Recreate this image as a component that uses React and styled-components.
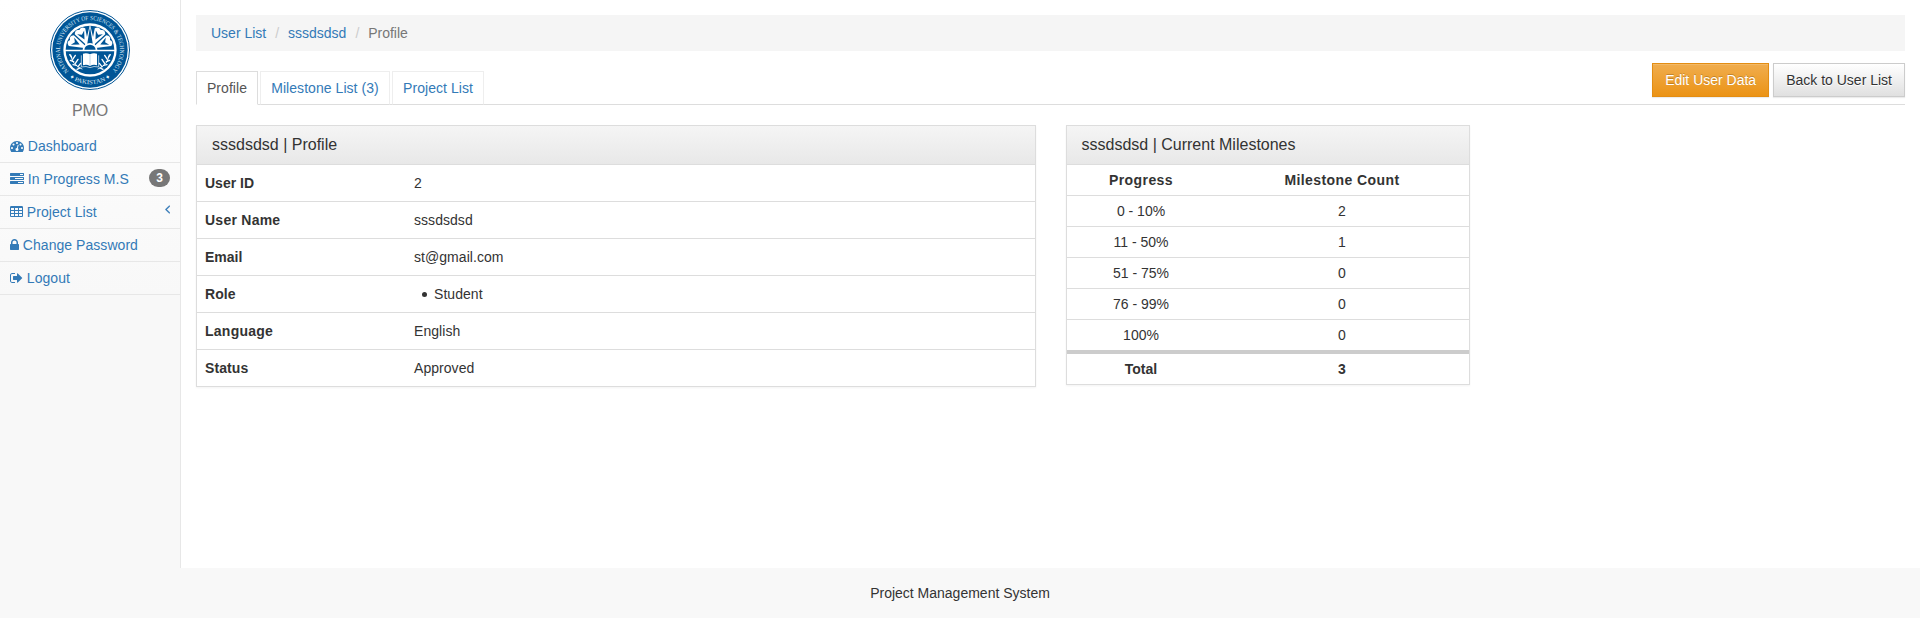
import React from "react";
import styled, { createGlobalStyle, css } from "styled-components";

const GlobalStyle = createGlobalStyle`
  *, *::before, *::after { box-sizing: border-box; }
  body {
    margin: 0;
    background: #f8f8f8;
    color: #333;
    font: 14px/20px "Liberation Sans", Arial, sans-serif;
  }
`;

const Page = styled.div`
  display: flex;
  flex-direction: column;
  height: 618px;
`;

const Body = styled.div`
  display: flex;
  flex: 1;
`;

const Footer = styled.footer`
  height: 50px;
  padding: 15px;
  text-align: center;
`;

/* Sidebar */

const Sidebar = styled.aside`
  width: 181px;
  border-right: 1px solid #e7e7e7;
  background: #f8f8f8 linear-gradient(#fff, #f8f8f8) no-repeat 0 0 / 100% 295px;
`;

const Brand = styled.div`
  display: flex;
  flex-direction: column;
  align-items: center;
  height: 130px;
  padding-top: 10px;
  color: #777;
  font-size: 16px;
  letter-spacing: -0.2px;
`;

const BrandName = styled.span`
  margin-top: 11px;
`;

const Menu = styled.nav`
  display: flex;
  flex-direction: column;
`;

const MenuLink = styled.a`
  display: flex;
  align-items: flex-start;
  height: 33px;
  padding: 6px 10px;
  border-bottom: 1px solid #e7e7e7;
  color: #337ab7;
  letter-spacing: 0.05px;
  white-space: pre;
`;

const Glyph = styled.svg`
  flex: none;
  width: ${(p) => p.$w}px;
  height: 14px;
  margin: 3px 3.8px 0 0;
  fill: currentColor;
`;

const Arrow = styled(Glyph)`
  margin: 0 0 0 auto;
  stroke: currentColor;
  stroke-width: 50;
`;

const Badge = styled.span`
  margin: 0 0 0 auto;
  min-width: 10px;
  padding: 3px 7px;
  border-radius: 10px;
  background: #777;
  color: #fff;
  font-size: 12px;
  font-weight: 700;
  line-height: 12px;
`;

/* Content */

const Content = styled.main`
  flex: 1;
  padding: 15px 15px 0;
  background: #fff;
`;

const Crumb = styled.li`
  white-space: pre;
  color: ${(p) => (p.$active ? "#777" : "#337ab7")};
`;

const Breadcrumb = styled.ol`
  display: flex;
  gap: 4px;
  margin: 0;
  padding: 8px 15px;
  list-style: none;
  background: #f5f5f5;

  li + li::before {
    content: "/\u00a0";
    padding: 0 5px;
    color: #ccc;
  }
`;

const Toolbar = styled.div`
  display: flex;
  justify-content: space-between;
  height: 42px;
  margin-top: 12px;
  border-bottom: 1px solid #ddd;
`;

const Tabs = styled.div`
  display: flex;
  gap: 2px;
  margin: 8px 0 -1px;
`;

const Tab = styled.a`
  width: ${(p) => p.$w}px;
  height: 34px;
  padding: 6px 0;
  border: 1px solid #eee;
  border-bottom-color: #ddd;
  color: #337ab7;
  letter-spacing: 0.05px;
  text-align: center;
  ${(p) =>
    p.$active &&
    css`
      border-color: #ddd;
      border-bottom-color: #fff;
      background: #fff;
      color: #555;
    `}
`;

const Actions = styled.div`
  display: flex;
  gap: 4px;
`;

const Button = styled.button`
  height: 34px;
  padding: 6px 12px;
  border: 1px solid #ccc;
  background: linear-gradient(#fff, #e0e0e0);
  color: #333;
  font: inherit;
  text-shadow: 0 1px 0 #fff;
  box-shadow: inset 0 1px 0 rgba(255, 255, 255, 0.15), 0 1px 1px rgba(0, 0, 0, 0.075);
  ${(p) =>
    p.$warning &&
    css`
      border-color: #e38d13;
      background: linear-gradient(#f0ad4e, #eb9316);
      color: #fff;
      text-shadow: 0 -1px 0 rgba(0, 0, 0, 0.2);
    `}
`;

const Panels = styled.div`
  display: flex;
  align-items: flex-start;
  gap: 30px;
  margin-top: 20px;
`;

const Panel = styled.section`
  width: ${(p) => p.$w}px;
  border: 1px solid #ddd;
  background: #fff;
  box-shadow: 0 1px 2px rgba(0, 0, 0, 0.05);
`;

const PanelTitle = styled.h3`
  height: 39px;
  margin: 0;
  padding: 10px ${(p) => p.$inset || 15}px;
  border-bottom: 1px solid #ddd;
  background: linear-gradient(#f5f5f5, #e8e8e8);
  font-size: 16px;
  font-weight: 400;
  line-height: 18px;
`;

const Rows = styled.div`
  display: flex;
  flex-direction: column;

  > * + * {
    border-top: 1px solid #ddd;
  }
`;

const CountRows = styled(Rows)`
  text-align: center;

  > :last-child {
    border-top: 4px solid #ccc;
  }
`;

const ProfileRow = styled.div`
  display: grid;
  grid-template-columns: 209px 1fr;

  > * {
    padding: 8px;
  }
`;

const CountRow = styled.div`
  display: grid;
  grid-template-columns: 148px 1fr;
  font-weight: ${(p) => (p.$bold ? 700 : 400)};
  letter-spacing: ${(p) => p.$tracking || 0}px;

  > * {
    padding: 5px;
  }
`;

const Label = styled.div`
  font-weight: 700;
  letter-spacing: ${(p) => p.$tracking}px;
`;

const Value = styled.div`
  letter-spacing: 0.05px;
`;

const RoleList = styled.ul`
  margin: 0;
  padding: 0 0 0 8px;
  list-style: none;
`;

const Role = styled.li`
  display: flex;
  align-items: center;
  gap: 7px;

  &::before {
    content: "";
    width: 5px;
    height: 5px;
    border-radius: 50%;
    background: #333;
  }
`;

const ICONS = {
  dashboard: {
    w: 14,
    box: "0 0 1792 1792",
    d: "M384 1152q0-53-37.5-90.5t-90.5-37.5-90.5 37.5-37.5 90.5 37.5 90.5 90.5 37.5 90.5-37.5 37.5-90.5zm192-448q0-53-37.5-90.5t-90.5-37.5-90.5 37.5-37.5 90.5 37.5 90.5 90.5 37.5 90.5-37.5 37.5-90.5zm428 481l101-382q6-26-7.5-48.5t-38.5-29.5-48 6.5-30 39.5l-101 382q-60 5-107 43.5t-63 98.5q-20 77 20 146t117 89 146-20 89-117q16-60-6-117t-72-91zm660-33q0-53-37.5-90.5t-90.5-37.5-90.5 37.5-37.5 90.5 37.5 90.5 90.5 37.5 90.5-37.5 37.5-90.5zm-640-640q0-53-37.5-90.5t-90.5-37.5-90.5 37.5-37.5 90.5 37.5 90.5 90.5 37.5 90.5-37.5 37.5-90.5zm448 192q0-53-37.5-90.5t-90.5-37.5-90.5 37.5-37.5 90.5 37.5 90.5 90.5 37.5 90.5-37.5 37.5-90.5zm320 448q0 261-141 483-19 29-54 29h-1402q-35 0-54-29-141-221-141-483 0-182 71-348t191-286 286-191 348-71 348 71 286 191 191 286 71 348z",
  },
  tasks: {
    w: 14,
    box: "0 0 1792 1792",
    d: "M1024 1408h640v-128h-640v128zm-384-512h1024v-128h-1024v128zm640-512h384v-128h-384v128zm512 832v256q0 26-19 45t-45 19h-1664q-26 0-45-19t-19-45v-256q0-26 19-45t45-19h1664q26 0 45 19t19 45zm0-512v256q0 26-19 45t-45 19h-1664q-26 0-45-19t-19-45v-256q0-26 19-45t45-19h1664q26 0 45 19t19 45zm0-512v256q0 26-19 45t-45 19h-1664q-26 0-45-19t-19-45v-256q0-26 19-45t45-19h1664q26 0 45 19t19 45z",
  },
  table: {
    w: 13,
    box: "64 0 1664 1792",
    d:
      [
        [192, 384], [704, 384], [1216, 384],
        [192, 768], [704, 768], [1216, 768],
        [192, 1152], [704, 1152], [1216, 1152],
      ]
        .map(([x, y]) => `M${x + 384} ${y + 224}v-192q0-14-9-23t-23-9h-320q-14 0-23 9t-9 23v192q0 14 9 23t23 9h320q14 0 23-9t9-23z`)
        .join("") +
      "M1728 288v1088q0 66-47 113t-113 47h-1344q-66 0-113-47t-47-113v-1088q0-66 47-113t113-47h1344q66 0 113 47t47 113z",
  },
  lock: {
    w: 9,
    box: "320 0 1152 1792",
    d: "M640 768h512v-192q0-106-75-181t-181-75-181 75-75 181v192zm832 96v576q0 40-28 68t-68 28h-960q-40 0-68-28t-28-68v-576q0-40 28-68t68-28h32v-192q0-184 132-316t316-132 316 132 132 316v192h32q40 0 68 28t28 68z",
  },
  logout: {
    w: 13,
    box: "64 0 1664 1792",
    d: "M704 1440q0 4 1 20t.5 26.5-3 23.5-10 19.5-20.5 6.5h-320q-119 0-203.5-84.5t-84.5-203.5v-704q0-119 84.5-203.5t203.5-84.5h320q13 0 22.5 9.5t9.5 22.5q0 4 1 20t.5 26.5-3 23.5-10 19.5-20.5 6.5h-320q-66 0-113 47t-47 113v704q0 66 47 113t113 47h312l11.5 1 11.5 3 8 5.5 7 9 2 13.5zm928-544q0 26-19 45l-544 544q-19 19-45 19t-45-19-19-45v-288h-448q-26 0-45-19t-19-45v-384q0-26 19-45t45-19h448v-288q0-26 19-45t45-19 45 19l544 544q19 19 19 45z",
  },
  angle: {
    w: 5,
    box: "576 0 640 1792",
    d: "M1203 544q0 13-10 23l-393 393 393 393q10 10 10 23t-10 23l-50 50q-10 10-23 10t-23-10l-466-466q-10-10-10-23t10-23l466-466q10-10 23-10t23 10l50 50q10 10 10 23z",
  },
};

function Icon({ name, as: Component = Glyph }) {
  const icon = ICONS[name];
  return (
    <Component $w={icon.w} viewBox={icon.box} aria-hidden="true">
      <path fillRule="evenodd" d={icon.d} />
    </Component>
  );
}

const SealImage = styled.svg`
  width: 80px;
  height: 80px;
  flex: none;
`;

const SealText = styled.text`
  fill: #dcebf6;
  font: 400 18.5px "Liberation Serif", serif;
  letter-spacing: 0;
`;

const BLUE = "#005596";

function Laurel() {
  return (
    <g fill="none" stroke="#fff" strokeLinecap="round">
      <path d="M62 134q4 32 34 43" strokeWidth="2.5" />
      <path
        d="M65 142l-6-8M68 148l8-12M71 155l-10-4M76 160l8-12M80 166l-11-2M84 170l8-10M90 174l-9 4"
        strokeWidth="4"
      />
    </g>
  );
}

function Seal() {
  return (
    <SealImage viewBox="0 0 240 240" aria-hidden="true">
      <defs>
        <path id="sealTop" d="M56.4 183.6A90 90 0 1 1 183.6 183.6" />
        <path id="sealBottom" d="M40 184A102 102 0 0 0 200 184" />
      </defs>
      <circle cx="120" cy="120" r="118.5" fill="#fff" stroke={BLUE} strokeWidth="3" />
      <circle cx="120" cy="120" r="113" fill={BLUE} />
      <SealText>
        <textPath href="#sealTop" textLength="420" lengthAdjust="spacingAndGlyphs">
          NATIONAL UNIVERSITY OF SCIENCES &amp; TECHNOLOGY
        </textPath>
      </SealText>
      <SealText>
        <textPath href="#sealBottom" startOffset="27" textLength="130" lengthAdjust="spacingAndGlyphs">
          ♦ PAKISTAN ♦
        </textPath>
      </SealText>
      <circle cx="120" cy="120" r="80" fill="#fff" />
      <circle cx="120" cy="120" r="73" fill={BLUE} />
      {[-65, -29, 29, 65].map((angle) => (
        <g key={angle} transform={`rotate(${angle} 120 118)`}>
          <path d="M120 112L102 56Q110 43 120 52Q130 43 138 56Z" fill="#fff" />
          <path d="M120 84L108 60L120 68L132 60Z" fill={BLUE} />
        </g>
      ))}
      <path d="M120 43L105 106H135Z" fill="#fff" />
      <path d="M120 51L111 106H129Z" fill={BLUE} />
      <path d="M98 121A22 22 0 0 1 142 121Z" fill="#fff" />
      <path d="M103 121A17 17 0 0 1 137 121Z" fill={BLUE} />
      <path d="M45 119H195V124H45Z" fill="#fff" />
      <path d="M99 131Q110 127 120 133Q130 127 141 131V166Q130 162 120 168Q110 162 99 166Z" fill="#fff" />
      <path d="M120 134V167" stroke="#9cc0dc" strokeWidth="2" />
      <path d="M94 136V171Q109 167 120 173Q131 167 146 171V136" fill="none" stroke="#fff" strokeWidth="2" />
      <Laurel />
      <g transform="matrix(-1 0 0 1 240 0)">
        <Laurel />
      </g>
    </SealImage>
  );
}

const PROFILE = [
  { label: "User ID", value: "2", tracking: 0 },
  { label: "User Name", value: "sssdsdsd", tracking: 0.25 },
  { label: "Email", value: "st@gmail.com", tracking: 0 },
  { label: "Role", value: <RoleList><Role>Student</Role></RoleList>, tracking: 0.1 },
  { label: "Language", value: "English", tracking: 0.25 },
  { label: "Status", value: "Approved", tracking: 0.1 },
];

const COUNTS = [
  { range: "Progress", count: "Milestone Count", bold: true, tracking: 0.42 },
  { range: "0 - 10%", count: "2" },
  { range: "11 - 50%", count: "1" },
  { range: "51 - 75%", count: "0" },
  { range: "76 - 99%", count: "0" },
  { range: "100%", count: "0" },
  { range: "Total", count: "3", bold: true },
];

export default function App() {
  return (
    <Page>
      <GlobalStyle />
      <Body>
        <Sidebar>
          <Brand>
            <Seal />
            <BrandName>PMO</BrandName>
          </Brand>
          <Menu>
            <MenuLink><Icon name="dashboard" />Dashboard</MenuLink>
            <MenuLink><Icon name="tasks" />In Progress M.S<Badge>3</Badge></MenuLink>
            <MenuLink><Icon name="table" />Project List<Icon name="angle" as={Arrow} /></MenuLink>
            <MenuLink><Icon name="lock" />Change Password</MenuLink>
            <MenuLink><Icon name="logout" />Logout</MenuLink>
          </Menu>
        </Sidebar>
        <Content>
          <Breadcrumb>
            <Crumb>User List</Crumb>
            <Crumb>sssdsdsd</Crumb>
            <Crumb $active>Profile</Crumb>
          </Breadcrumb>
          <Toolbar>
            <Tabs>
              <Tab $w={62} $active>Profile</Tab>
              <Tab $w={130}>Milestone List (3)</Tab>
              <Tab $w={92}>Project List</Tab>
            </Tabs>
            <Actions>
              <Button $warning>Edit User Data</Button>
              <Button>Back to User List</Button>
            </Actions>
          </Toolbar>
          <Panels>
            <Panel $w={840}>
              <PanelTitle>sssdsdsd | Profile</PanelTitle>
              <Rows>
                {PROFILE.map(({ label, value, tracking }) => (
                  <ProfileRow key={label}>
                    <Label $tracking={tracking}>{label}</Label>
                    <Value>{value}</Value>
                  </ProfileRow>
                ))}
              </Rows>
            </Panel>
            <Panel $w={404}>
              <PanelTitle $inset={14.5}>sssdsdsd | Current Milestones</PanelTitle>
              <CountRows>
                {COUNTS.map(({ range, count, bold, tracking }) => (
                  <CountRow key={range} $bold={bold} $tracking={tracking}>
                    <div>{range}</div>
                    <div>{count}</div>
                  </CountRow>
                ))}
              </CountRows>
            </Panel>
          </Panels>
        </Content>
      </Body>
      <Footer>Project Management System</Footer>
    </Page>
  );
}
